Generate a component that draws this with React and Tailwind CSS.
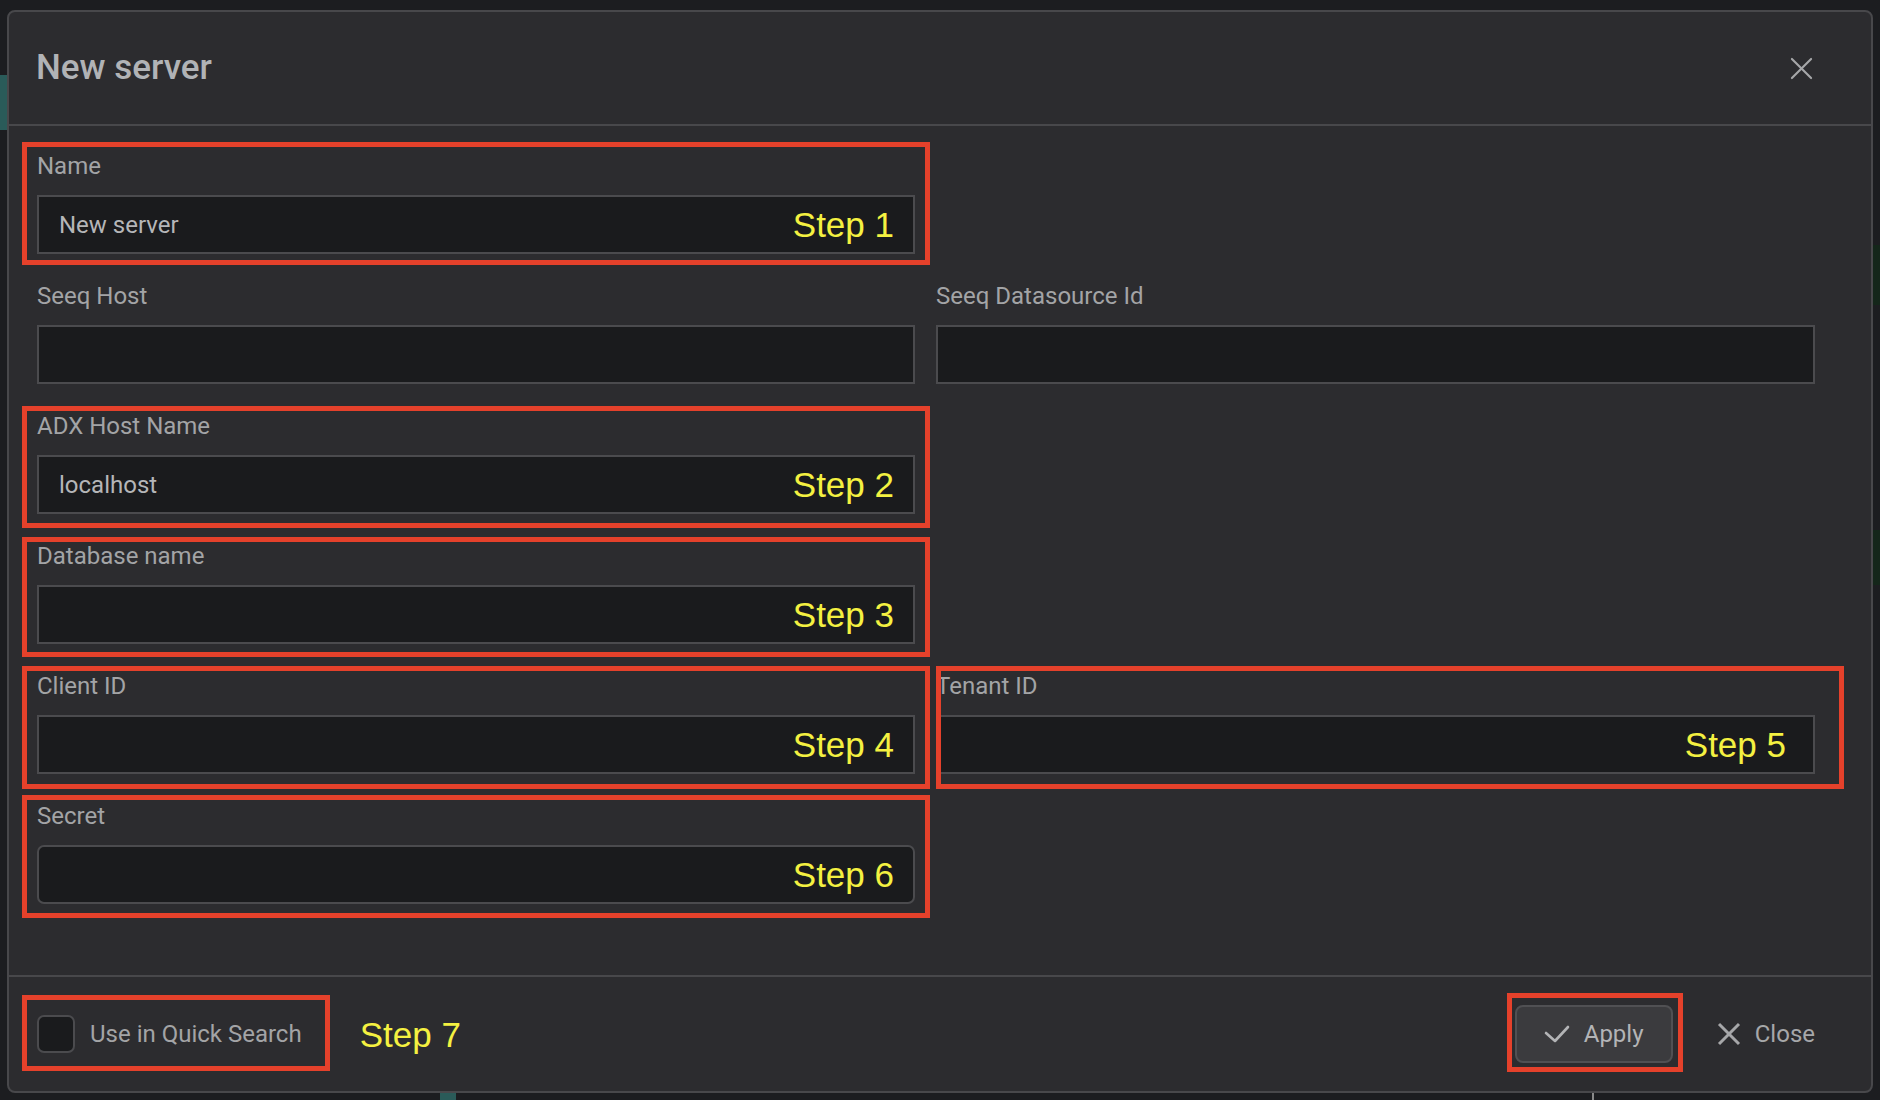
import React from 'react';

const RED = 'border-[#e5412b]';

const Field = ({ label, value, step, box, rounded, stepPad = 'pr-[19px]' }) => (
  <div className="relative">
    <div className="h-[32px] leading-[32px] text-[24px] text-[#a3a4a6]">{label}</div>
    <div
      className={`mt-[13px] h-[59px] border-2 border-[#4b4b4e] bg-[#1a1b1d] flex items-center justify-between pl-[20px] ${stepPad} ${
        rounded ? 'rounded-[7px]' : ''
      }`}
    >
      <span className="text-[24px] text-[#b5b6b8]">{value}</span>
      {step && (
        <span className="text-[35px] leading-none text-[#f4f141] font-['Liberation_Sans',Arial,sans-serif]">
          {step}
        </span>
      )}
    </div>
    {box && <div className={`absolute pointer-events-none border-[5px] ${RED} ${box}`} />}
  </div>
);

export default function App() {
  return (
    <div className="relative w-[1880px] h-[1100px] overflow-hidden bg-[#1c1d20] pl-[7px] pt-[10px] font-['Roboto','Liberation_Sans',sans-serif]">
      {/* bits of the page behind the modal */}
      <div className="absolute left-0 top-[75px] w-[7px] h-[55px] bg-[#2a5b59]" />
      <div className="absolute right-0 top-[245px] w-[7px] h-[60px] bg-[#14261a]" />
      <div className="absolute right-0 top-[530px] w-[7px] h-[55px] bg-[#14261a]" />
      <div className="absolute left-[440px] bottom-0 w-[16px] h-[7px] bg-[#2a5b59]" />
      <div className="absolute left-[1592px] bottom-0 w-[2px] h-[7px] bg-[#8a8a8a]" />

      <div className="relative w-[1866px] h-[1083px] flex flex-col rounded-[8px] border-2 border-[#48484b] bg-[#2c2c2f]">
        {/* header */}
        <div className="h-[114px] shrink-0 flex items-center justify-between pl-[27px] pr-[58px] border-b-2 border-[#48484b]">
          <h2 className="text-[35px] font-medium text-[#b1b3b6]">New server</h2>
          <button className="text-[#a6a7a9]">
            <svg width="23" height="23" viewBox="0 0 24 24" fill="none" stroke="currentColor" strokeWidth="2.2" strokeLinecap="round">
              <line x1="2" y1="2" x2="22" y2="22" />
              <line x1="22" y1="2" x2="2" y2="22" />
            </svg>
          </button>
        </div>

        {/* form */}
        <div className="flex-1 pl-[28px] pt-[24px]">
          <div className="grid grid-cols-[878px_879px] gap-x-[21px] gap-y-[26px]">
            <Field label="Name" value="New server" step="Step 1" box="-left-[15px] -right-[15px] -top-[8px] -bottom-[11px]" />
            <div />
            <Field label="Seeq Host" />
            <Field label="Seeq Datasource Id" />
            <Field label="ADX Host Name" value="localhost" step="Step 2" box="-left-[15px] -right-[15px] -top-[4px] -bottom-[14px]" />
            <div />
            <Field label="Database name" step="Step 3" box="-left-[15px] -right-[15px] -top-[3px] -bottom-[13px]" />
            <div />
            <Field label="Client ID" step="Step 4" box="-left-[15px] -right-[15px] -top-[4px] -bottom-[15px]" />
            <Field label="Tenant ID" step="Step 5" stepPad="pr-[27px]" box="left-0 -right-[29px] -top-[4px] -bottom-[15px]" />
            <Field label="Secret" step="Step 6" rounded box="-left-[15px] -right-[15px] -top-[5px] -bottom-[14px]" />
            <div />
          </div>
        </div>

        {/* footer */}
        <div className="h-[116px] shrink-0 flex items-center justify-between pl-[28px] pr-[56px] border-t-2 border-[#48484b]">
          <div className="flex items-center">
            <label className="relative flex items-center gap-[15px]">
              <span className="w-[38px] h-[38px] rounded-[7px] border-2 border-[#4b4b4e] bg-[#1a1b1d]" />
              <span className="text-[24px] text-[#a3a4a6]">Use in Quick Search</span>
              <div className={`absolute pointer-events-none border-[5px] ${RED} -left-[15px] -right-[28px] -top-[20px] -bottom-[18px]`} />
            </label>
            <span className="ml-[58px] text-[35px] leading-none text-[#f4f141] font-['Liberation_Sans',Arial,sans-serif]">
              Step 7
            </span>
          </div>

          <div className="flex items-center gap-[44px]">
            <div className="relative">
              <button className="w-[158px] h-[58px] rounded-[8px] border-2 border-[#505053] bg-[#3b3b3e] flex items-center pl-[27px] gap-[14px] text-[#b3b4b6]">
                <svg width="26" height="18" viewBox="0 0 26 18" fill="none" stroke="currentColor" strokeWidth="2.6" strokeLinecap="round" strokeLinejoin="round">
                  <polyline points="2,8 11,16 24,2" />
                </svg>
                <span className="text-[24px]">Apply</span>
              </button>
              <div className={`absolute pointer-events-none border-[5px] ${RED} -left-[8px] -right-[10px] -top-[12px] -bottom-[9px]`} />
            </div>
            <button className="flex items-center gap-[14px] text-[#a6a7a9]">
              <svg width="24" height="24" viewBox="0 0 24 24" fill="none" stroke="currentColor" strokeWidth="3">
                <line x1="2" y1="2" x2="22" y2="22" />
                <line x1="22" y1="2" x2="2" y2="22" />
              </svg>
              <span className="text-[24px]">Close</span>
            </button>
          </div>
        </div>
      </div>
    </div>
  );
}
